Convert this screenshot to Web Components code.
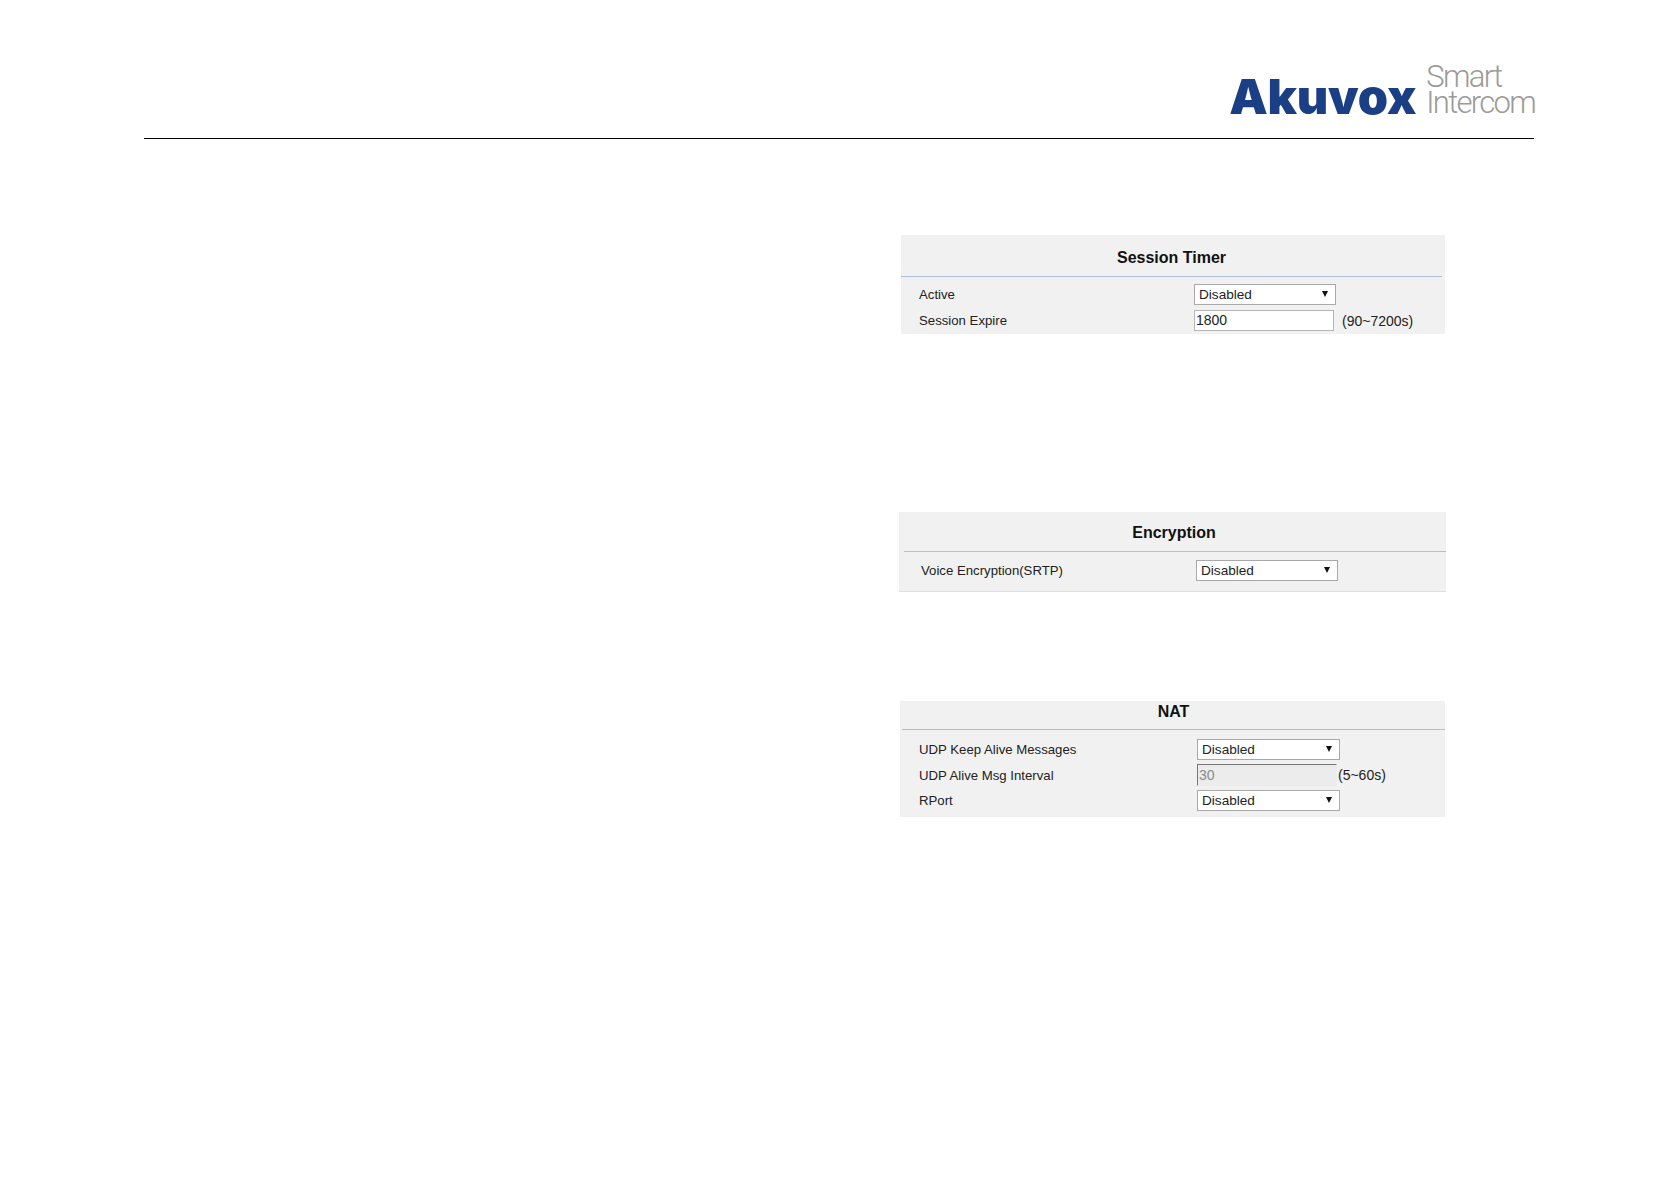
<!DOCTYPE html>
<html>
<head>
<meta charset="utf-8">
<title>Akuvox Smart Intercom</title>
<style>
  html, body { margin: 0; background: #fff; }
</style>
</head>
<body>
<manual-page>
  <form-panel heading="Session Timer" top="96" left="757" width="544" pad="18" label="275" head="42" rule-right="3" title-top="4" end="3">
    <form-row label="Active"><form-select value="Disabled" width="142"></form-select></form-row>
    <form-row label="Session Expire" hint="(90~7200s)" hint-gap="8"><form-input value="1800" width="140" height="21"></form-input></form-row>
  </form-panel>
  <form-panel heading="Encryption" top="178" left="755" width="547" pad="22" label="275" head="40" rule-left="5" title-top="3" title-shift="-1" start="8" end="10" edge>
    <form-row label="Voice Encryption(SRTP)"><form-select value="Disabled" width="142"></form-select></form-row>
  </form-panel>
  <form-panel heading="NAT" top="109" left="756" width="545" pad="19" label="278" head="29" rule-left="2" title-bottom="6" gap="4" start="9" end="6">
    <form-row label="UDP Keep Alive Messages"><form-select value="Disabled" width="143"></form-select></form-row>
    <form-row label="UDP Alive Msg Interval" hint="(5~60s)" hint-gap="1"><form-input value="30" width="140" disabled></form-input></form-row>
    <form-row label="RPort"><form-select value="Disabled" width="143"></form-select></form-row>
  </form-panel>
</manual-page>

<script>
const FONT = '"Liberation Sans", Arial, sans-serif';

class ManualPage extends HTMLElement {
    constructor() {
        super();
        this.attachShadow({ mode: 'open' });
        this.shadowRoot.innerHTML = `
            <style>
                :host {
                    display: block;
                    box-sizing: border-box;
                    width: 1678px;
                    height: 1185px;
                    padding: 0 144px;
                    background: #fff;
                    overflow: hidden;
                }
                header {
                    display: flex;
                    justify-content: flex-end;
                    align-items: flex-end;
                    height: 138px;
                    border-bottom: 1px solid #000;
                }
                main { display: flex; flex-direction: column; }
            </style>
            <header><brand-logo></brand-logo></header>
            <main><slot></slot></main>
        `;
    }
}

class BrandLogo extends HTMLElement {
    constructor() {
        super();
        this.attachShadow({ mode: 'open' });
        this.shadowRoot.innerHTML = `
            <style>
                :host {
                    display: flex;
                    align-items: flex-end;
                    gap: 10px;
                    margin-right: -1px;
                    padding-bottom: 22px;
                }
                .name {
                    font: 900 48.5px/36px Inter, ${FONT};
                    color: #1a3f85;
                    letter-spacing: -0.2px;
                    height: 36px;
                    margin-bottom: 1px;
                }
                .tag {
                    font: 300 31px/26px Roboto, sans-serif;
                    color: #9b9b9b;
                    letter-spacing: -1.7px;
                    display: flex;
                    flex-direction: column;
                }
                .tag span { display: block; height: 26px; }
            </style>
            <div class="name">Akuvox</div>
            <div class="tag"><span>Smart</span><span>Intercom</span></div>
        `;
    }
}

class FormPanel extends HTMLElement {
    constructor() {
        super();
        this.attachShadow({ mode: 'open' });
    }

    connectedCallback() {
        const attr = (name, fallback) => this.getAttribute(name) || fallback;
        this.shadowRoot.innerHTML = `
            <style>
                :host {
                    display: block;
                    box-sizing: border-box;
                    margin-top: ${attr('top', 0)}px;
                    margin-left: ${attr('left', 0)}px;
                    width: ${attr('width', 544)}px;
                    background: #f1f1f1;
                    ${this.hasAttribute('edge') ? 'border-bottom: 1px solid #e0e0e0;' : ''}
                    font-family: ${FONT};
                }
                h2 {
                    margin: 0 ${attr('rule-right', 0)}px 0 ${attr('rule-left', 0)}px;
                    height: ${attr('head', 42)}px;
                    padding: ${attr('title-top', 0)}px 0 ${attr('title-bottom', 0)}px;
                    display: flex;
                    align-items: center;
                    justify-content: center;
                    box-sizing: border-box;
                    border-bottom: 1px solid #adbfe0;
                    font-size: 16px;
                    font-weight: 700;
                    color: #111;
                }
                h2 span { position: relative; left: ${attr('title-shift', 0)}px; }
                .rows {
                    display: flex;
                    flex-direction: column;
                    gap: ${attr('gap', 5)}px;
                    padding: ${attr('start', 7)}px 0 ${attr('end', 4)}px ${attr('pad', 18)}px;
                    --label-width: ${attr('label', 275)}px;
                }
            </style>
            <h2><span>${attr('heading', '')}</span></h2>
            <div class="rows"><slot></slot></div>
        `;
    }
}

class FormRow extends HTMLElement {
    constructor() {
        super();
        this.attachShadow({ mode: 'open' });
    }

    connectedCallback() {
        const hint = this.getAttribute('hint');
        const hintGap = this.getAttribute('hint-gap') || 9;
        this.shadowRoot.innerHTML = `
            <style>
                :host {
                    display: flex;
                    align-items: center;
                    font-size: 13.2px;
                    color: #222;
                }
                .label { width: var(--label-width); flex: none; }
                .hint { margin-left: ${hintGap}px; font-size: 14px; }
            </style>
            <span class="label">${this.getAttribute('label')}</span>
            <slot></slot>
            ${hint ? `<span class="hint">${hint}</span>` : ''}
        `;
    }
}

class FormSelect extends HTMLElement {
    constructor() {
        super();
        this.attachShadow({ mode: 'open' });
    }

    connectedCallback() {
        this.shadowRoot.innerHTML = `
            <style>
                :host {
                    display: flex;
                    align-items: center;
                    justify-content: space-between;
                    box-sizing: border-box;
                    width: ${this.getAttribute('width')}px;
                    height: 21px;
                    padding: 0 7px 0 4px;
                    background: #fff;
                    border: 1px solid #a9a9a9;
                    font-size: 13.6px;
                    color: #222;
                }
                .arrow {
                    width: 0;
                    height: 0;
                    border: 3.5px solid transparent;
                    border-top: 6px solid #111;
                    border-bottom: 0;
                    margin-top: -2px;
                }
            </style>
            <span>${this.getAttribute('value')}</span>
            <span class="arrow"></span>
        `;
    }
}

class FormInput extends HTMLElement {
    constructor() {
        super();
        this.attachShadow({ mode: 'open' });
    }

    connectedCallback() {
        const disabled = this.hasAttribute('disabled');
        const height = parseInt(this.getAttribute('height') || 22);
        this.shadowRoot.innerHTML = `
            <style>
                :host {
                    display: block;
                    box-sizing: border-box;
                    width: ${this.getAttribute('width')}px;
                    height: ${height}px;
                    line-height: ${height - 2}px;
                    padding: 0 1px;
                    background: ${disabled ? '#ececec' : '#fff'};
                    border: 1px solid #b5b5b5;
                    ${disabled ? 'border-color: #777 transparent transparent #777;' : ''}
                    font-size: 14px;
                    color: ${disabled ? '#8a8a8a' : '#222'};
                }
            </style>
            ${this.getAttribute('value')}
        `;
    }
}

customElements.define('manual-page', ManualPage);
customElements.define('brand-logo', BrandLogo);
customElements.define('form-panel', FormPanel);
customElements.define('form-row', FormRow);
customElements.define('form-select', FormSelect);
customElements.define('form-input', FormInput);
</script>
</body>
</html>
